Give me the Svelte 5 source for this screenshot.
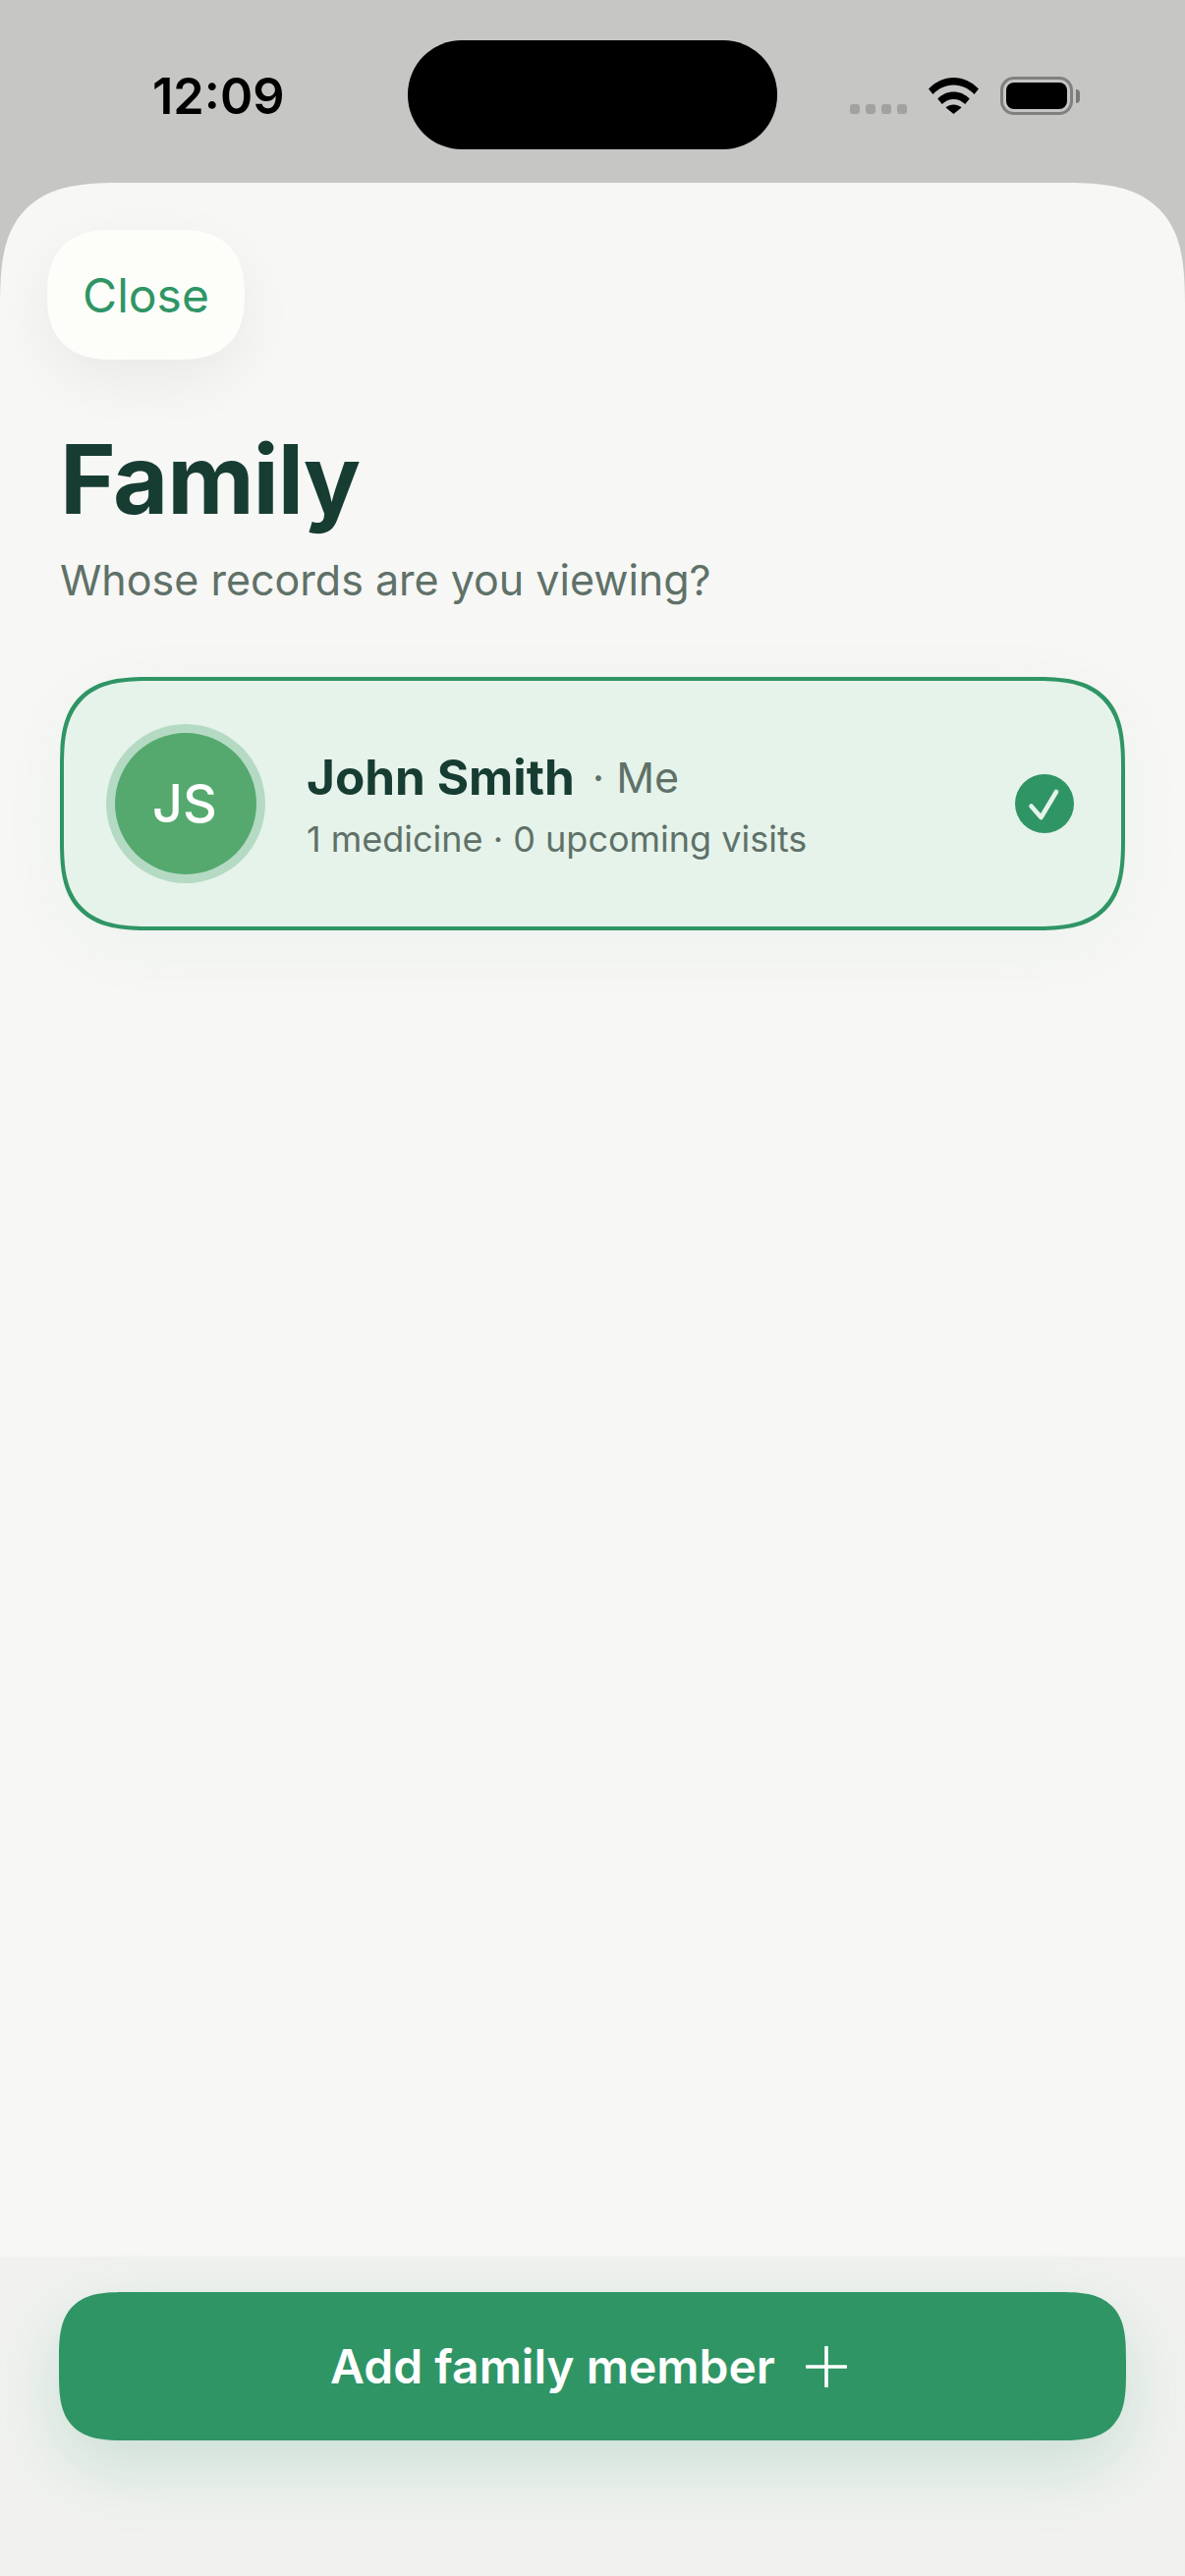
<script>
  let member = {
    initials: "JS",
    name: "John Smith",
    role: "Me",
    details: "1 medicine · 0 upcoming visits"
  };
</script>

<div class="screen">
  <header class="status-bar">
    <div class="time">12:09</div>
    <div class="island"></div>
    <div class="status-icons">
      <div class="signal">
        <span></span><span></span><span></span><span></span>
      </div>
      <svg class="wifi" width="51" height="37" viewBox="0 0 51 37">
        <path d="M0 11.5C7 4.2 16 0 25.5 0S44 4.2 51 11.5L46.5 17C40.8 11 33.4 7.6 25.5 7.6S10.2 11 4.5 17Z" />
        <path d="M9.2 21.5C13.5 17 19.3 14.4 25.5 14.4S37.5 17 41.8 21.5L37.2 27C34 23.7 29.9 21.9 25.5 21.9S17 23.7 13.8 27Z" />
        <path d="M17.5 30.6C19.7 28.5 22.5 27.4 25.5 27.4S31.3 28.5 33.5 30.6L25.5 37Z" />
      </svg>
      <div class="battery">
        <div class="battery-fill"></div>
      </div>
      <div class="battery-cap"></div>
    </div>
  </header>

  <main class="sheet">
    <div class="content">
      <button class="close">Close</button>
      <h1>Family</h1>
      <p class="subtitle">Whose records are you viewing?</p>

      <div class="card">
        <div class="avatar">{member.initials}</div>
        <div class="info">
          <div class="name-row">
            <span class="name">{member.name}</span>
            <span class="role">· {member.role}</span>
          </div>
          <div class="details">{member.details}</div>
        </div>
        <div class="check">
          <svg width="60" height="60" viewBox="0 0 60 60">
            <path d="M16.5 32.5L26.5 44L42 18" fill="none" stroke="#e6f3ea" stroke-width="4.6" stroke-linecap="round" stroke-linejoin="round" />
          </svg>
        </div>
      </div>
    </div>

    <footer class="footer">
      <button class="add">
        <span>Add family member</span>
        <svg width="42" height="42" viewBox="0 0 42 42">
          <path d="M21 1V41M1 21H41" fill="none" stroke="#fff" stroke-width="3.6" stroke-linecap="round" />
        </svg>
      </button>
    </footer>
  </main>
</div>

<style>
  :global(body) {
    margin: 0;
    background: #c6c6c4;
  }

  .screen {
    width: 1206px;
    height: 2622px;
    display: flex;
    flex-direction: column;
    overflow: hidden;
    background: #c6c6c4;
    font-family: Inter, "Liberation Sans", sans-serif;
  }

  .status-bar {
    height: 186px;
    flex-shrink: 0;
    display: grid;
    grid-template-columns: 415px 376px 1fr;
    box-sizing: border-box;
    padding-top: 41px;
  }

  .time {
    height: 111px;
    padding-left: 155px;
    font-size: 50.5px;
    font-weight: 600;
    line-height: 114px;
    color: #000;
  }

  .island {
    height: 111px;
    background: #000;
    border-radius: 55px;
  }

  .status-icons {
    display: flex;
    align-items: flex-start;
    padding: 37px 0 0 74px;
  }

  .signal {
    display: flex;
    gap: 6px;
    margin-top: 28px;
    margin-right: 22px;
  }

  .signal span {
    width: 10px;
    height: 10px;
    border-radius: 3px;
    background: #a2a2a0;
  }

  .wifi {
    margin-top: 1px;
    margin-right: 22px;
  }

  .battery {
    width: 74px;
    height: 39px;
    box-sizing: border-box;
    border: 3px solid #808080;
    border-radius: 14px;
    padding: 3px;
  }

  .battery-fill {
    height: 100%;
    background: #000;
    border-radius: 8px;
  }

  .battery-cap {
    width: 4px;
    height: 14px;
    margin: 13px 0 0 3px;
    background: #7a7a7a;
    border-radius: 0 4px 4px 0;
  }

  .sheet {
    flex: 1;
    display: flex;
    flex-direction: column;
    overflow: hidden;
    background: #f7f7f5;
    border-radius: 130px 130px 0 0;
    corner-shape: superellipse(1.6);
  }

  .content {
    flex: 1;
    padding: 48px 61px 0;
  }

  .close {
    display: block;
    width: 201px;
    height: 132px;
    margin-left: -13px;
    padding: 2px 0 0;
    border: none;
    border-radius: 66px;
    corner-shape: superellipse(1.3);
    background: #fdfefa;
    box-shadow: 0 20px 60px rgba(0, 0, 0, 0.06);
    font-family: inherit;
    font-size: 48px;
    line-height: 130px;
    color: #2f9565;
  }

  h1 {
    margin: 62px 0 0;
    font-size: 97px;
    font-weight: 700;
    line-height: 120px;
    letter-spacing: -1.2px;
    color: #173d33;
  }

  .subtitle {
    margin: 14px 0 0;
    font-size: 43px;
    line-height: 56px;
    color: #5f7168;
  }

  .card {
    height: 258px;
    margin-top: 71px;
    box-sizing: border-box;
    display: flex;
    align-items: center;
    padding: 0 48px 0 43px;
    border: 4px solid #2f9565;
    border-radius: 92px;
    corner-shape: superellipse(1.5);
    background: #e6f3ea;
    box-shadow: 0 16px 70px rgba(47, 149, 101, 0.05);
  }

  .avatar {
    width: 144px;
    height: 144px;
    margin: 0 9px;
    padding: 0 2px 2px 0;
    box-sizing: border-box;
    flex-shrink: 0;
    display: flex;
    align-items: center;
    justify-content: center;
    border-radius: 50%;
    background: #55a96e;
    box-shadow: 0 0 0 9px #b5dac4;
    font-size: 54px;
    font-weight: 500;
    color: #fff;
  }

  .info {
    flex: 1;
    margin-left: 42px;
  }

  .name-row {
    display: flex;
    align-items: center;
    gap: 18px;
    height: 62px;
    line-height: 62px;
  }

  .name {
    font-size: 49.5px;
    font-weight: 700;
    color: #173d33;
  }

  .role {
    font-size: 43px;
    color: #5f7168;
  }

  .details {
    margin-top: 9px;
    font-size: 36px;
    line-height: 46px;
    color: #5f7168;
  }

  .check {
    width: 60px;
    height: 60px;
    flex-shrink: 0;
    border-radius: 50%;
    background: #2f9565;
  }

  .check svg {
    display: block;
  }

  .footer {
    height: 325px;
    flex-shrink: 0;
    box-sizing: border-box;
    padding: 36px 60px 0;
    background: #f1f2f0;
  }

  .add {
    width: 100%;
    height: 151px;
    display: flex;
    align-items: center;
    justify-content: center;
    gap: 31px;
    padding: 0 8px 0 0;
    border: none;
    border-radius: 70px;
    corner-shape: superellipse(1.6);
    background: #2f9565;
    box-shadow: 0 26px 70px rgba(47, 149, 101, 0.2);
    font-family: inherit;
    font-size: 48px;
    font-weight: 600;
    color: #fff;
  }

  .add svg {
    display: block;
  }
</style>
